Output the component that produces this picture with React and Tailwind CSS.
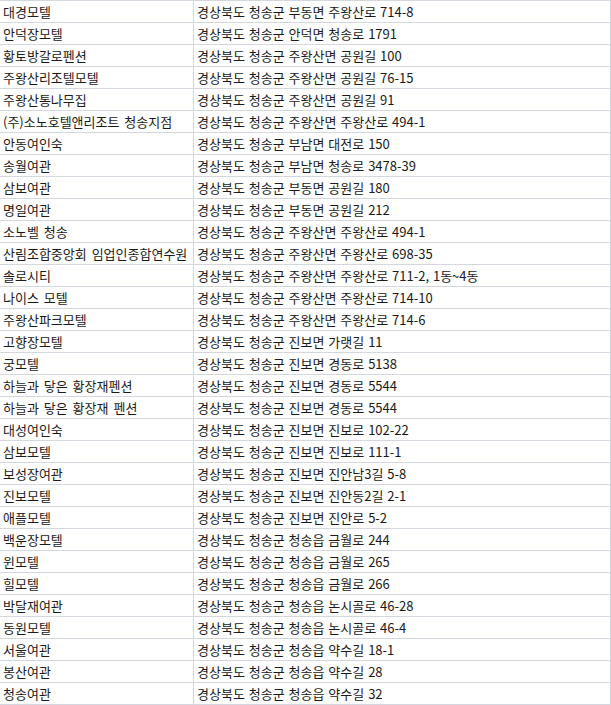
const rows = [
  ["대경모텔", "경상북도 청송군 부동면 주왕산로 714-8"],
  ["안덕장모텔", "경상북도 청송군 안덕면 청송로 1791"],
  ["황토방갈로펜션", "경상북도 청송군 주왕산면 공원길 100"],
  ["주왕산리조텔모텔", "경상북도 청송군 주왕산면 공원길 76-15"],
  ["주왕산통나무집", "경상북도 청송군 주왕산면 공원길 91"],
  ["(주)소노호텔앤리조트 청송지점", "경상북도 청송군 주왕산면 주왕산로 494-1"],
  ["안동여인숙", "경상북도 청송군 부남면 대전로 150"],
  ["송월여관", "경상북도 청송군 부남면 청송로 3478-39"],
  ["삼보여관", "경상북도 청송군 부동면 공원길 180"],
  ["명일여관", "경상북도 청송군 부동면 공원길 212"],
  ["소노벨 청송", "경상북도 청송군 주왕산면 주왕산로 494-1"],
  ["산림조합중앙회 임업인종합연수원", "경상북도 청송군 주왕산면 주왕산로 698-35"],
  ["솔로시티", "경상북도 청송군 주왕산면 주왕산로 711-2, 1동~4동"],
  ["나이스 모텔", "경상북도 청송군 주왕산면 주왕산로 714-10"],
  ["주왕산파크모텔", "경상북도 청송군 주왕산면 주왕산로 714-6"],
  ["고향장모텔", "경상북도 청송군 진보면 가랫길 11"],
  ["궁모텔", "경상북도 청송군 진보면 경동로 5138"],
  ["하늘과 닿은 황장재펜션", "경상북도 청송군 진보면 경동로 5544"],
  ["하늘과 닿은 황장재 펜션", "경상북도 청송군 진보면 경동로 5544"],
  ["대성여인숙", "경상북도 청송군 진보면 진보로 102-22"],
  ["삼보모텔", "경상북도 청송군 진보면 진보로 111-1"],
  ["보성장여관", "경상북도 청송군 진보면 진안남3길 5-8"],
  ["진보모텔", "경상북도 청송군 진보면 진안동2길 2-1"],
  ["애플모텔", "경상북도 청송군 진보면 진안로 5-2"],
  ["백운장모텔", "경상북도 청송군 청송읍 금월로 244"],
  ["윈모텔", "경상북도 청송군 청송읍 금월로 265"],
  ["힐모텔", "경상북도 청송군 청송읍 금월로 266"],
  ["박달재여관", "경상북도 청송군 청송읍 논시골로 46-28"],
  ["동원모텔", "경상북도 청송군 청송읍 논시골로 46-4"],
  ["서울여관", "경상북도 청송군 청송읍 약수길 18-1"],
  ["봉산여관", "경상북도 청송군 청송읍 약수길 28"],
  ["청송여관", "경상북도 청송군 청송읍 약수길 32"],
];

export default function App() {
  return (
    <div className="w-[611px] bg-white border-t border-r border-[#d4d7de] font-['Noto_Sans_CJK_KR',sans-serif] text-[13px] text-[#1a1a1a]">
      {rows.map(([name, addr], i) => (
        <div key={i} className="flex h-[22px] border-b border-[#d4d7de]">
          <div className="w-[194px] shrink-0 border-r border-[#d4d7de] pl-[3px] flex items-center whitespace-nowrap overflow-hidden [word-spacing:2px]">
            {name}
          </div>
          <div className="flex-1 pl-[3px] flex items-center whitespace-nowrap [word-spacing:1px]">
            {addr}
          </div>
        </div>
      ))}
    </div>
  );
}
